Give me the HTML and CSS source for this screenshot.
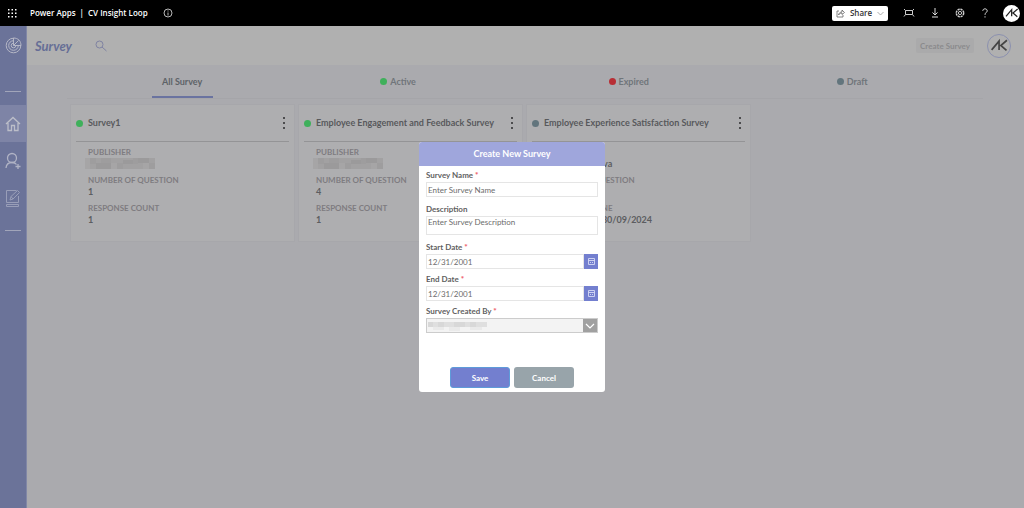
FILE: index.html
```html
<!DOCTYPE html>
<html lang="en">
<head>
<meta charset="utf-8">
<title>CV Insight Loop</title>
<link rel="stylesheet" href="styles.css">
</head>
<body>
<svg class="defs" width="0" height="0" aria-hidden="true">
  <symbol id="ak" viewBox="0 0 24 24"><path d="M3 17 11.500 7v10M20.500 6l-7 6 6.500 5.500" fill="none" stroke="currentColor" stroke-width="1.900"/></symbol>
  <symbol id="mosaic" viewBox="0 0 70 11" preserveAspectRatio="none">
    <rect width="70" height="11" fill="#a2a1a2"/>
    <path d="M0 0h5v11H0zM26 5h6v6h-6zM58 5h6v6h-6z" fill="#a6a5a6"/>
    <path d="M5 0h6v6H5zM16 0h10v6H16zM32 5h6v6h-6zM48 0h5v6h-5zM64 5h6v6h-6z" fill="#9e9d9e"/>
    <path d="M11 5h15v6H11zM38 2h10v4H38zM53 0h11v5H53z" fill="#9b9a9b"/>
  </symbol>
  <symbol id="calendar" viewBox="0 0 9 9"><path d="M1.500 1.500h6v6h-6zM1.500 3.500h6M3 5.500h1M5 5.500h1" fill="none" stroke="currentColor" stroke-width=".9"/></symbol>
</svg>
<div class="app">
  <header class="topbar">
    <button class="icon-btn waffle" aria-label="App launcher"><svg width="10" height="10" viewBox="0 0 10 10" fill="#fff"><path d="M1 1h1.500v1.500H1zM4.500 1H6v1.500H4.500zM8 1h1.500v1.500H8zM1 4.500h1.500V6H1zM4.500 4.500H6V6H4.500zM8 4.500h1.500V6H8zM1 8h1.500v1.500H1zM4.500 8H6v1.500H4.500zM8 8h1.500v1.500H8z"/></svg></button>
    <div class="product"><span>Power Apps</span><span>|</span><span>CV Insight Loop</span></div>
    <button class="icon-btn" aria-label="App details"><svg width="10" height="10" viewBox="0 0 10 10" fill="none" stroke="#ccc" stroke-width=".9"><circle cx="5" cy="5" r="4"/><path d="M5 4.500v3M5 2.500v1"/></svg></button>
    <div class="top-actions">
      <button class="share"><svg width="9" height="9" viewBox="0 0 9 9" fill="none" stroke="#666" stroke-width=".8"><path d="M3 2H1v6h6V6M2.500 6C3 4 4 3 6 3V1l2.500 2.500L6 5.500v-1.500C4.500 4 3.500 4.500 2.500 6z"/></svg>Share<svg width="7" height="5" viewBox="0 0 7 5" fill="none" stroke="#999" stroke-width=".8"><path d="m.5 1 3 3 3-3"/></svg></button>
      <button class="icon-btn" aria-label="Fit to screen"><svg width="12" height="10" viewBox="0 0 12 10" fill="none" stroke="#ccc"><path d="M2.500 2.500h7v4h-7zM1 1l1.500 1.500M11 1 9.500 2.500M1 8.500l1.500-2M11 8.500l-1.500-2"/></svg></button>
      <button class="icon-btn" aria-label="Download"><svg width="10" height="10" viewBox="0 0 10 10" fill="none" stroke="#ddd"><path d="M5 0v7M2.500 4.500 5 7l2.500-2.500M2 9h6"/></svg></button>
      <button class="icon-btn" aria-label="Settings"><svg width="10" height="10" viewBox="0 0 10 10" fill="none" stroke="#ccc"><circle cx="5" cy="5" r="3.700" stroke-width="1.500" stroke-dasharray="2.200 .7"/><circle cx="5" cy="5" r="1.600"/></svg></button>
      <button class="icon-btn" aria-label="Help"><svg width="10" height="10" viewBox="0 0 10 10" fill="none" stroke="#ddd"><path d="M2.800 2.800C2.800.2 7.200.2 7.200 2.800 7.200 4.600 5 4.500 5 6.800M5 8.300v1.200"/></svg></button>
      <button class="account" aria-label="Account"><svg width="16" height="16"><use href="#ak"/></svg></button>
    </div>
  </header>
  <div class="shell">
    <nav class="sidebar" aria-label="Main">
      <a class="brand" href="#" aria-label="Insight Loop"><svg width="17" height="17" viewBox="0 0 17 17" fill="none" stroke="currentColor"><path d="M8.500 1.200A7.300 7.300 0 1 0 15.800 8.500M8.500 3.700A4.800 4.800 0 1 0 13.300 8.500M8.500 6.200A2.300 2.300 0 1 0 10.800 8.500M8.500 1v7.500H16C16 4 13 1 8.500 1zM8.500 8.500 13.500 3.500"/></svg></a>
      <span class="rule"></span>
      <a class="nav active" href="#" aria-label="Home"><svg width="16" height="16" viewBox="0 0 16 16" fill="none" stroke="currentColor" stroke-width="1.300"><path d="M1 8 8 1.500 15 8M3 7v7.500h3.500V9.500h3v5H13V7"/></svg></a>
      <a class="nav" href="#" aria-label="Add user"><svg width="16" height="18" viewBox="0 0 16 18" fill="none" stroke="currentColor" stroke-width="1.300"><circle cx="7" cy="6" r="4.500"/><path d="M1 16c.3-3.500 2.500-5.500 6-5.500 2 0 3.500.5 4.500 2M13 12v5M10.500 14.500h5"/></svg></a>
      <a class="nav faint" href="#" aria-label="Edit surveys"><svg width="16" height="18" viewBox="0 0 16 18" fill="none" stroke="currentColor"><path d="M13.500 7v6.500h-12v-12h10M1.500 15.500h12v2h-12zM5 11l1-3.500 6.500-6 2 2L8 10zM6 7.500 8 10"/></svg></a>
      <span class="rule"></span>
    </nav>
    <main class="page">
      <div class="page-head">
        <h1>Survey</h1>
        <button class="icon-btn search" aria-label="Search"><svg width="12" height="12" viewBox="0 0 12 12" fill="none" stroke="#7f83a2"><circle cx="4.500" cy="4.500" r="3.500"/><path d="m7 7 4.500 4"/></svg></button>
        <button class="create">Create Survey</button>
        <button class="avatar" aria-label="Profile"><svg width="21" height="21"><use href="#ak"/></svg></button>
      </div>
      <div class="tabs" role="tablist">
        <button class="tab selected" role="tab" aria-selected="true"><i class="dot none"></i>All Survey</button>
        <button class="tab" role="tab"><i class="dot green"></i>Active</button>
        <button class="tab" role="tab"><i class="dot red"></i>Expired</button>
        <button class="tab" role="tab"><i class="dot slate"></i>Draft</button>
      </div>
      <section class="cards">
        <article class="card">
          <div class="card-head"><i class="dot green"></i><h2>Survey1</h2><button class="more" aria-label="More options"><i></i><i></i><i></i></button></div>
          <dl>
            <dt>PUBLISHER</dt><dd><svg class="redacted" width="70" height="11"><use href="#mosaic"/></svg></dd>
            <dt>NUMBER OF QUESTION</dt><dd>1</dd>
            <dt>RESPONSE COUNT</dt><dd>1</dd>
          </dl>
        </article>
        <article class="card">
          <div class="card-head"><i class="dot green"></i><h2>Employee Engagement and Feedback Survey</h2><button class="more" aria-label="More options"><i></i><i></i><i></i></button></div>
          <dl>
            <dt>PUBLISHER</dt><dd><svg class="redacted" width="70" height="11"><use href="#mosaic"/></svg></dd>
            <dt>NUMBER OF QUESTION</dt><dd>4</dd>
            <dt>RESPONSE COUNT</dt><dd>1</dd>
          </dl>
        </article>
        <article class="card">
          <div class="card-head"><i class="dot slate"></i><h2>Employee Experience Satisfaction Survey</h2><button class="more" aria-label="More options"><i></i><i></i><i></i></button></div>
          <dl>
            <dt></dt><dd class="publisher">va</dd>
            <dt>NUMBER OF QUESTION</dt><dd></dd>
            <dt>SURVEY TIMELINE</dt><dd>16/09/2024 - 30/09/2024</dd>
          </dl>
        </article>
      </section>
    </main>
    <div class="overlay">
      <form class="modal" role="dialog" aria-labelledby="modal-title">
        <h2 id="modal-title">Create New Survey</h2>
        <div class="fields">
          <div class="field"><label for="name">Survey Name <b>*</b></label><input id="name" type="text" placeholder="Enter Survey Name"></div>
          <div class="field"><label for="description">Description</label><textarea id="description" placeholder="Enter Survey Description"></textarea></div>
          <div class="field compact"><label for="start">Start Date <b>*</b></label><div class="combo"><input id="start" type="text" placeholder="12/31/2001"><button type="button" aria-label="Pick start date"><svg width="9" height="9"><use href="#calendar"/></svg></button></div></div>
          <div class="field compact"><label for="end">End Date <b>*</b></label><div class="combo"><input id="end" type="text" placeholder="12/31/2001"><button type="button" aria-label="Pick end date"><svg width="9" height="9"><use href="#calendar"/></svg></button></div></div>
          <div class="field compact"><label for="owner">Survey Created By <b>*</b></label>
            <div class="combo owner"><select id="owner"><option></option></select>
              <svg class="owner-value" width="59" height="10" viewBox="0 0 59 10"><path d="M0 1h59v5H0z" fill="#dfdfdf"/><path d="M0 1h5v5H0zM10 1h6v5h-6zM26 1h11v5H26zM42 1h6v5h-6z" fill="#d8d8d8"/><path d="M5 6h11v3H5zM21 6h11v4H21zM42 6h12v3H42z" fill="#eaeaea"/></svg>
              <span class="arrow"><svg width="10" height="8" viewBox="0 0 10 8" fill="none" stroke="#fff" stroke-width="1.200"><path d="m1 2 4 4 4-4"/></svg></span></div></div>
        </div>
        <div class="actions"><button type="submit" class="save">Save</button><button type="button" class="cancel">Cancel</button></div>
      </form>
    </div>
  </div>
</div>
</body>
</html>
```
FILE: styles.css
```css
* { box-sizing: border-box; }
body { margin: 0; font: 9px/12px Lato, "Open Sans", sans-serif; color: #65676b; }
button, input, textarea, select { font: inherit; color: inherit; margin: 0; padding: 0; border: 0; background: none; border-radius: 0; }
h1, h2, dl, dd { margin: 0; }
svg { display: block; flex: none; }
.defs { position: absolute; }
.app { display: flex; flex-direction: column; min-height: 100vh; }

.topbar { display: flex; align-items: center; height: 26px; padding: 0 4px 0 7px; background: #000; color: #fff; font-family: "Open Sans", sans-serif; font-size: 8px; font-weight: 600; }
.icon-btn { display: flex; }
.waffle { margin-right: 13px; }
.product { display: flex; gap: 4px; margin-right: 15px; }
.top-actions { display: flex; align-items: center; gap: 15px; margin-left: auto; }
.share { display: flex; align-items: center; justify-content: center; gap: 5px; width: 56px; height: 15px; border-radius: 2px; background: #fff; color: #333; }
.account { display: grid; place-items: center; width: 17px; height: 17px; margin-left: -2px; border-radius: 50%; background: #fff; color: #222; }

.shell { position: relative; flex: 1; display: flex; background: #aaaaae; }
.sidebar { display: flex; flex-direction: column; align-items: center; width: 27px; background: #6b7399; border-right: 1px solid #8187a6; color: #b5b7c6; }
.brand { margin: 11px 0 37px; color: inherit; }
.rule { width: 16px; height: 1px; background: #a1a5ba; }
.nav { display: grid; place-items: center; align-self: stretch; height: 37px; color: #b0b3c5; }
.nav.active { margin-top: 13px; background: #7e84a6; color: #bcbec9; }
.nav.faint { color: #999eb8; }
.nav + .rule { margin-top: 14px; }

.page { flex: 1; min-width: 0; }
.page-head { display: flex; align-items: center; height: 39px; padding: 0 13px 0 8px; background: #b0b0b0; }
h1 { margin-right: 23px; font-size: 13px; font-weight: 700; font-style: italic; line-height: 16px; color: #666e96; }
.create { width: 58px; height: 15px; margin-left: auto; border-radius: 2px; background: #aaaaab; color: #8a8b8d; font-size: 8px; font-weight: 700; }
.avatar { display: grid; place-items: center; width: 24px; height: 24px; margin-left: 13px; border: 1px solid #8b90af; border-radius: 50%; color: #444; }

.tabs { display: grid; grid-template-columns: repeat(4, 1fr); margin: 0 41px 5px 40px; border-bottom: 1px solid #a5a5a9; padding-left: 3px; }
.tab { display: flex; align-items: center; gap: 3px; justify-self: start; height: 33px; margin-left: 82px; border: solid transparent; border-width: 2px 0; color: #70757a; font-weight: 700; }
.tab.selected { padding-right: 11px; border-bottom-color: #6a73a0; color: #5d6267; }
.dot { flex: none; width: 7px; height: 7px; border-radius: 50%; }
.none { background: none; }
.green { background: #3fb05b; }
.red { background: #b82e35; }
.slate { background: #62757d; }

.cards { display: grid; grid-template-columns: repeat(auto-fill, 225px); gap: 3px; padding-left: 43px; }
.card { height: 138px; padding: 0 5px; background: #aeaeb0; border: 1px solid #a7a7ab; }
.card-head { display: flex; align-items: center; gap: 5px; height: 37px; border-bottom: 1px solid #949496; }
.card h2 { flex: 1; font-size: 9px; font-weight: 700; white-space: nowrap; color: #58595c; }
.more { display: grid; gap: 3px; padding: 3px 4px; }
.more i { width: 2px; height: 2px; background: #4c4c4e; }
dl { padding: 4px 12px; font-weight: 700; }
dt { height: 12px; font-size: 8px; color: #7e7c80; white-space: nowrap; }
dd { height: 11px; margin-bottom: 5px; line-height: 11px; color: #5c5d60; }
.redacted { margin-left: -3px; }
.publisher { padding-left: 59px; }

.overlay { position: absolute; inset: 0; display: grid; place-items: center; }
.modal { width: 186px; border-radius: 3px; background: #fff; overflow: hidden; }
.modal h2 { background: #9fa6dc; color: #fff; font-size: 9px; font-weight: 700; line-height: 24px; text-align: center; }
.fields { display: grid; gap: 6px; padding: 3px 7px 0; font-size: 8px; }
.field { display: grid; gap: 1px; }
.compact + .compact { margin-top: -2px; }
label { font-weight: 700; color: #5f5f5f; }
label b { color: #ee5b68; }
input, textarea { width: 100%; min-width: 0; height: 15px; padding: 0 1px; border: 1px solid #e5e5e5; color: #6c6c6c; }
textarea { display: block; height: 19px; line-height: 11px; resize: none; overflow: hidden; }
::placeholder { color: #6c6c6c; opacity: 1; }
.combo { position: relative; display: flex; }
.combo button, .arrow { display: grid; place-items: center; flex: none; width: 14px; height: 15px; background: #737fcf; color: #d5d9f5; }
.owner { border: 1px solid #ccc; background: #f3f3f3; }
select { flex: 1; min-width: 0; height: 13px; appearance: none; }
.owner-value { position: absolute; left: 1px; top: 2px; }
.owner .arrow { height: 13px; background: #a0a0a0; pointer-events: none; }
.actions { display: flex; justify-content: center; gap: 4px; padding: 34px 0 4px; }
.actions button { width: 60px; height: 21px; border-radius: 3px; color: #fff; font-size: 8px; font-weight: 700; }
.actions .save { background: #737fcf; border: 1px solid #5e9bd9; }
.actions .cancel { background: #98a4aa; }
```
